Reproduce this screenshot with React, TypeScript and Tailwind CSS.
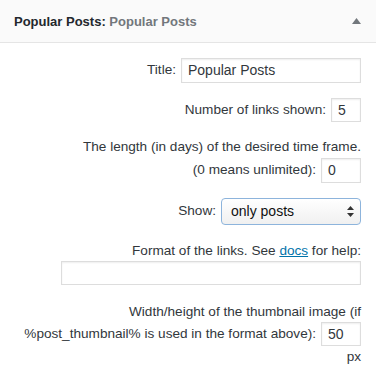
import React from "react";

const font = { fontFamily: '"Liberation Sans", Arial, sans-serif' };

function Input({ w, h, value }: { w: string; h: string; value?: string }) {
  return (
    <div
      className={`${w} ${h} border border-[#dddddd] bg-white shadow-[inset_0_1px_2px_rgba(0,0,0,0.07)] flex items-center px-[6px] text-[14px] text-[#32373c]`}
    >
      {value}
    </div>
  );
}

export default function App() {
  return (
    <div className="w-[376px] h-[376px] bg-white text-[13.6px] text-[#32373c] overflow-hidden" style={font}>
      <div className="h-[43px] bg-[#fafafa] border-b border-[#e5e5e5] flex items-center pl-[14px] pr-[15px]">
        <div className="text-[13px] font-bold text-[#23282d] leading-none">
          Popular Posts: <span className="text-[#72777c]">Popular Posts</span>
        </div>
        <div className="ml-auto">
          <svg width="9" height="6" viewBox="0 0 9 6">
            <polygon points="4.5,0 9,6 0,6" fill="#72777c" />
          </svg>
        </div>
      </div>
      <div className="pt-[15px] pr-[15px] flex flex-col items-end">
        <div className="flex items-center gap-[5px]">
          <span>Title:</span>
          <Input w="w-[180px]" h="h-[25px]" value="Popular Posts" />
        </div>
        <div className="flex items-center gap-[5px] mt-[15px]">
          <span>Number of links shown:</span>
          <Input w="w-[30px]" h="h-[24px]" value="5" />
        </div>
        <div className="mt-[15px] leading-[20px] h-[20px]">The length (in days) of the desired time frame.</div>
        <div className="flex items-center gap-[5px] mt-[1px]">
          <span>(0 means unlimited):</span>
          <Input w="w-[40px]" h="h-[25px]" value="0" />
        </div>
        <div className="flex items-center gap-[5px] mt-[15px]">
          <span>Show:</span>
          <div className="w-[140px] h-[27px] rounded-[4px] border border-[#8db4dc] bg-gradient-to-b from-white to-[#f0f0f0] flex items-center pl-[9px] pr-[6px] text-[14px] text-[#111]">
            <span>only posts</span>
            <svg className="ml-auto" width="7" height="11" viewBox="0 0 7 11">
              <polygon points="3.5,0 7,4 0,4" fill="#333" />
              <polygon points="0,7 7,7 3.5,11" fill="#333" />
            </svg>
          </div>
        </div>
        <div className="mt-[16px] leading-[20px] h-[20px]">
          Format of the links. See <span className="text-[#0073aa] underline">docs</span> for help:
        </div>
        <Input w="w-[300px]" h="h-[24px]" />
        <div className="mt-[17px] leading-[20px] h-[20px]">Width/height of the thumbnail image (if</div>
        <div className="flex items-center gap-[5px]">
          <span>%post_thumbnail% is used in the format above):</span>
          <Input w="w-[40px]" h="h-[24px]" value="50" />
        </div>
        <div className="mt-[1px] leading-[20px] h-[20px]">px</div>
      </div>
    </div>
  );
}
